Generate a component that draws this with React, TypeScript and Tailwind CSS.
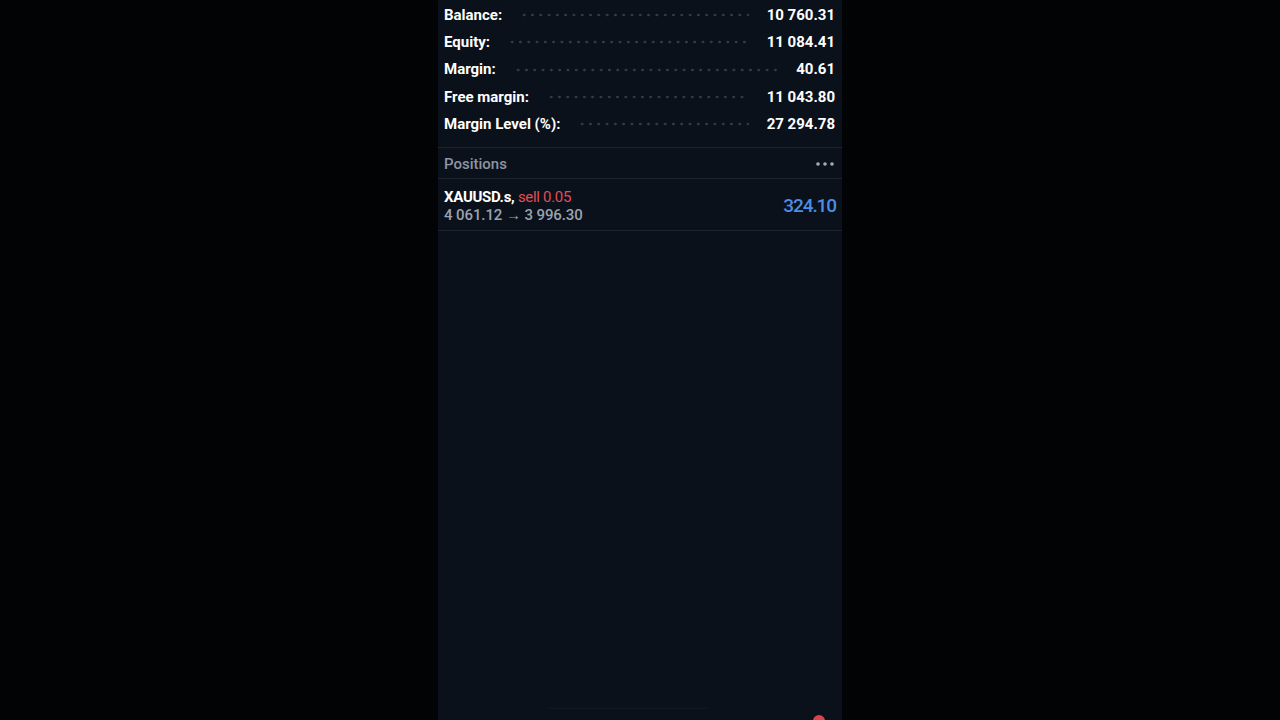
import React from "react";

const rows = [
  ["Balance:", "10 760.31"],
  ["Equity:", "11 084.41"],
  ["Margin:", "40.61"],
  ["Free margin:", "11 043.80"],
  ["Margin Level (%):", "27 294.78"],
];

export default function App() {
  return (
    <div className="w-[1280px] h-[720px] bg-[#020305] flex justify-center overflow-hidden" style={{ fontFamily: "Roboto, 'Noto Sans', sans-serif" }}>
      <div className="relative w-[404px] h-full bg-[#0b111b] flex flex-col">
        <div className="pt-[1.5px] px-[6px]">
          {rows.map(([l, v]) => (
            <div key={l} className="h-[27.3px] flex items-center text-[15px] font-bold text-white">
              <span className="whitespace-nowrap">{l}</span>
              <div className="flex-1 mx-[18px] h-[4px] bg-[radial-gradient(circle,#313a49_1px,transparent_1.7px)] bg-[length:8.3px_4px] bg-repeat-x" />
              <span className="whitespace-nowrap pr-[1px]">{v}</span>
            </div>
          ))}
        </div>
        <div className="mt-[9.5px] border-t border-[#1c232d]" />
        <div className="h-[30px] pt-[2px] px-[6px] flex items-center justify-between">
          <span className="text-[15px] font-medium text-[#8b95a3]">Positions</span>
          <svg width="18" height="6" viewBox="0 0 18 6" className="mr-[2px]">
            <circle cx="2" cy="3" r="1.8" fill="#a3acb8" />
            <circle cx="9" cy="3" r="1.8" fill="#a3acb8" />
            <circle cx="16" cy="3" r="1.8" fill="#a3acb8" />
          </svg>
        </div>
        <div className="border-t border-[#1c232d]" />
        <div className="h-[51px] pt-[2px] px-[6px] flex items-center justify-between">
          <div className="flex flex-col leading-[18px]">
            <div className="text-[15px] whitespace-nowrap tracking-[-0.3px]">
              <span className="font-bold text-white">XAUUSD.s, </span>
              <span className="text-[#e04f55]">sell 0.05</span>
            </div>
            <div className="text-[15px] font-medium text-[#9aa3af] whitespace-nowrap tracking-[-0.1px]">4 061.12 → 3 996.30</div>
          </div>
          <span className="text-[19px] font-medium text-[#4a8ee6] tracking-[-1.1px]">324.10</span>
        </div>
        <div className="border-t border-[#1c232d]" />
        <div className="absolute left-[110px] w-[160px] bottom-[11px] h-px bg-[#111822]" />
        <div className="absolute right-[17px] bottom-[-7px] w-[12px] h-[12px] rounded-full bg-[#d9434b]" />
      </div>
    </div>
  );
}
